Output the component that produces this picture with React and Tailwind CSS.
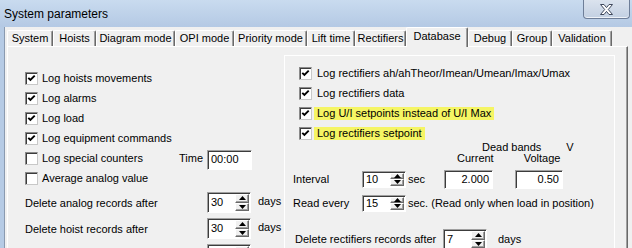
import React from "react";

const tabs = [
  { label: "System", w: "w-[46px]" },
  { label: "Hoists", w: "w-[43px]" },
  { label: "Diagram mode", w: "w-[79px]" },
  { label: "OPI mode", w: "w-[59px]" },
  { label: "Priority mode", w: "w-[73px]" },
  { label: "Lift time", w: "w-[48px]" },
  { label: "Rectifiers", w: "w-[51px]" },
  { label: "Database", w: "w-[62px]", active: true },
  { label: "Debug", w: "w-[44px]" },
  { label: "Group", w: "w-[40px]" },
  { label: "Validation", w: "w-[60px]" },
];

function Check({ on }) {
  return (
    <span className="w-[13px] h-[13px] shrink-0 bg-white border border-t-[#8a8a8a] border-l-[#8a8a8a] border-r-[#c8c8c8] border-b-[#c8c8c8] shadow-[inset_1px_1px_0_#3c3c3c] flex items-center justify-center">
      {on && (
        <svg width="9" height="9" viewBox="0 0 9 9">
          <path d="M1.3 3.8 L3.4 6 L7.7 1.6" stroke="#000" strokeWidth="1.9" fill="none" />
        </svg>
      )}
    </span>
  );
}

function Row({ on, children, gap = "gap-[4px]", hl }) {
  return (
    <div className={"h-[20px] flex items-center " + gap}>
      <Check on={on} />
      <span className={hl ? "bg-[#f5f564] px-[3px] -ml-[3px] leading-[13px]" : ""}>{children}</span>
    </div>
  );
}

function SpinBtn({ up }) {
  return (
    <div className="flex-1 bg-[#f0f0f0] border border-t-white border-l-white border-r-[#696969] border-b-[#696969] shadow-[inset_-1px_-1px_0_#a0a0a0] flex items-center justify-center">
      <svg width="7" height="4" viewBox="0 0 7 4">
        {up ? <path d="M0 4 L3.5 0 L7 4 Z" fill="#000" /> : <path d="M0 0 L7 0 L3.5 4 Z" fill="#000" />}
      </svg>
    </div>
  );
}

function Spin({ value, className }) {
  return (
    <div
      className={
        "flex shrink-0 bg-white border border-t-[#a0a0a0] border-l-[#a0a0a0] border-r-white border-b-white shadow-[inset_1px_1px_0_#3c3c3c] " +
        className
      }
    >
      <span className="flex-1 pl-[3px] flex items-center">{value}</span>
      <div className="w-[14px] flex flex-col my-[1px] mr-[1px]">
        <SpinBtn up />
        <SpinBtn />
      </div>
    </div>
  );
}

function Box({ value, className }) {
  return (
    <div
      className={
        "flex items-center shrink-0 bg-white border border-t-[#a0a0a0] border-l-[#a0a0a0] border-r-white border-b-white shadow-[inset_1px_1px_0_#3c3c3c] " +
        className
      }
    >
      {value}
    </div>
  );
}

export default function App() {
  return (
    <div className="w-[632px] h-[248px] overflow-hidden flex flex-col bg-[#b6cbe5] text-[11px] text-black font-['Liberation_Sans',Arial,sans-serif]">
      {/* Title bar */}
      <div className="h-[27px] shrink-0 flex justify-between items-start bg-gradient-to-b from-[#c9dbef] to-[#b4c9e4]">
        <span className="pl-[4px] pt-[7px] text-[12px] leading-[15px]">System parameters</span>
        <div className="mr-[2px] w-[47px] h-[19px] rounded-b-[4px] border border-t-0 border-[#6e7e98] bg-gradient-to-b from-[#dbe3ee] to-[#c3d0e2] shadow-[inset_0_-1px_0_#eef2f8] flex items-center justify-center">
          <svg width="13" height="11" viewBox="0 0 13 11">
            <path
              d="M0.5 0.5 H4 L6.5 3.6 L9 0.5 H12.5 L8.3 5.5 L12.5 10.5 H9 L6.5 7.4 L4 10.5 H0.5 L4.7 5.5 Z"
              fill="#fff"
              stroke="#3f485c"
              strokeWidth="1"
              strokeLinejoin="round"
            />
          </svg>
        </div>
      </div>

      {/* Client */}
      <div className="flex-1 flex">
        <div className="w-[4px] shrink-0 bg-[#b6cbe5]" />
        <div className="w-[1px] shrink-0 bg-[#8a9ab0]" />
        <div className="flex-1 bg-[#f0f0f0] flex flex-col pl-[2px] pr-[4px]">
          {/* Tabs */}
          <div className="h-[19px] shrink-0 flex items-end">
            {tabs.map((t) =>
              t.active ? (
                <div
                  key={t.label}
                  className={
                    t.w +
                    " h-[20px] -mb-[1px] relative z-10 bg-[#f0f0f0] rounded-t-[2px] border-t border-l border-white border-r border-r-[#696969] shadow-[inset_-1px_0_0_#a0a0a0] flex justify-center pt-[2px] leading-[13px]"
                  }
                >
                  {t.label}
                </div>
              ) : (
                <div
                  key={t.label}
                  className={
                    t.w +
                    " h-[16px] rounded-t-[2px] border-t border-l border-white border-r border-r-[#696969] shadow-[inset_-1px_0_0_#a0a0a0] flex justify-center items-center leading-[13px]"
                  }
                >
                  {t.label}
                </div>
              )
            )}
          </div>

          {/* Tab page */}
          <div className="flex-1 flex border-t border-l border-white border-r border-r-[#696969] shadow-[inset_-1px_0_0_#a0a0a0]">
            {/* Left column */}
            <div className="w-[276px] shrink-0 flex flex-col pt-[21px] pl-[17px]">
              <Row on>Log hoists movements</Row>
              <Row on>Log alarms</Row>
              <Row on>Log load</Row>
              <Row on>Log equipment commands</Row>
              <div className="h-[20px] flex items-center gap-[4px]">
                <Check />
                <span className="w-[133px]">Log special counters</span>
                <span className="w-[24px]">Time</span>
                <Box value={<span className="pl-[3px]">00:00</span>} className="w-[45px] h-[20px] mt-[3px]" />
              </div>
              <Row>Average analog value</Row>

              <div className="mt-[4px] flex flex-col gap-[5px]">
                <div className="h-[21px] flex items-center">
                  <span className="w-[182px] pt-[2px]">Delete analog records after</span>
                  <Spin value="30" className="w-[44px] h-[21px]" />
                  <span className="ml-[7px] -mt-[3px]">days</span>
                </div>
                <div className="h-[21px] flex items-center">
                  <span className="w-[182px] pt-[2px]">Delete hoist records after</span>
                  <Spin value="30" className="w-[44px] h-[21px]" />
                  <span className="ml-[7px] -mt-[3px]">days</span>
                </div>
                <div className="h-[21px] flex items-center">
                  <span className="w-[182px]" />
                  <Spin value="" className="w-[44px] h-[21px]" />
                </div>
              </div>
            </div>

            {/* Right panel */}
            <div className="w-[331px] shrink-0 mt-[8px] flex flex-col border-t border-l border-r border-white pt-[7px]">
              <div className="pl-[14px] flex flex-col">
                <Row on gap="gap-[5px]">Log rectifiers ah/ahTheor/Imean/Umean/Imax/Umax</Row>
                <Row on gap="gap-[5px]">Log rectifiers data</Row>
                <Row on gap="gap-[5px]" hl>Log U/I setpoints instead of U/I Max</Row>
                <Row on gap="gap-[5px]" hl>Log rectifiers setpoint</Row>
              </div>

              <div className="-mt-[1px] h-[11px] leading-[11px] flex">
                <span className="ml-[197px]">Dead bands</span>
                <span className="ml-[25px]">V</span>
              </div>
              <div className="h-[11px] leading-[11px] flex">
                <span className="ml-[172px]">Current</span>
                <span className="ml-[30px]">Voltage</span>
              </div>

              <div className="mt-[5px] h-[20px] flex items-center pl-[8px]">
                <span className="w-[69px]">Interval</span>
                <Spin value="10" className="w-[44px] h-[17px]" />
                <span className="w-[38px] pl-[2px]">sec</span>
                <Box value="2.000" className="w-[49px] h-[19px] justify-end pr-[3px]" />
                <Box value="0.50" className="ml-[22px] w-[48px] h-[19px] justify-end pr-[3px]" />
              </div>

              <div className="mt-[4px] h-[20px] flex items-center pl-[8px]">
                <span className="w-[69px]">Read every</span>
                <Spin value="15" className="w-[44px] h-[17px]" />
                <span className="pl-[2px]">sec. (Read only when load in position)</span>
              </div>

              <div className="mt-[16px] h-[21px] flex items-center pl-[10px]">
                <span className="w-[148px]">Delete rectifiers records after</span>
                <Spin value="7" className="w-[44px] h-[21px]" />
                <span className="ml-[11px]">days</span>
              </div>
            </div>
          </div>
        </div>
      </div>
    </div>
  );
}
